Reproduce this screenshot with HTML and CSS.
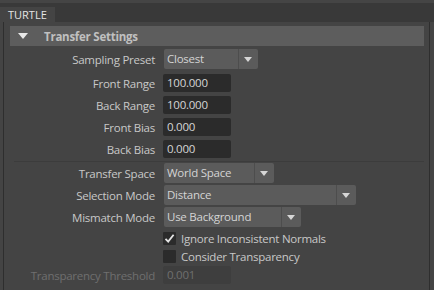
FILE: index.html
```html
<!DOCTYPE html>
<html lang="en">
<head>
    <meta charset="utf-8">
    <title>TURTLE</title>
    <link rel="stylesheet" href="styles.css">
</head>
<body>
    <div class="tabbar">
        <div class="tab">TURTLE</div>
    </div>
    <div class="panel">
        <div class="frame-header">
            <span class="frame-arrow"></span>
            <span class="frame-title">Transfer Settings</span>
        </div>

        <div class="row row-drop r-first">
            <label class="lbl">Sampling Preset</label>
            <div class="combo w-sampling"><span class="combo-text">Closest</span><span class="combo-btn"></span></div>
        </div>
        <div class="row row-field r-f1">
            <label class="lbl">Front Range</label>
            <div class="field">100.000</div>
        </div>
        <div class="row row-field">
            <label class="lbl">Back Range</label>
            <div class="field">100.000</div>
        </div>
        <div class="row row-field">
            <label class="lbl">Front Bias</label>
            <div class="field">0.000</div>
        </div>
        <div class="row row-field">
            <label class="lbl">Back Bias</label>
            <div class="field">0.000</div>
        </div>

        <div class="separator"></div>

        <div class="row row-drop r-after-sep">
            <label class="lbl">Transfer Space</label>
            <div class="combo w-space"><span class="combo-text">World Space</span><span class="combo-btn"></span></div>
        </div>
        <div class="row row-drop">
            <label class="lbl">Selection Mode</label>
            <div class="combo w-select"><span class="combo-text">Distance</span><span class="combo-btn"></span></div>
        </div>
        <div class="row row-drop">
            <label class="lbl">Mismatch Mode</label>
            <div class="combo w-mismatch"><span class="combo-text">Use Background</span><span class="combo-btn"></span></div>
        </div>

        <div class="row row-check r-c1">
            <span class="lbl"></span>
            <div class="check-wrap">
                <span class="checkbox checked">
                    <svg width="13" height="13" viewBox="0 0 13 13"><path d="M2.5 6.8 L5.2 9.6 L10.6 2.8" fill="none" stroke="#e6e6e6" stroke-width="1.8"/></svg>
                </span>
                <span class="check-text">Ignore Inconsistent Normals</span>
            </div>
        </div>
        <div class="row row-check r-c2">
            <span class="lbl"></span>
            <div class="check-wrap">
                <span class="checkbox"></span>
                <span class="check-text">Consider Transparency</span>
            </div>
        </div>
        <div class="row row-field r-last">
            <label class="lbl disabled">Transparency Threshold</label>
            <div class="field disabled">0.001</div>
        </div>
    </div>
</body>
</html>
```

FILE: styles.css
```css
html, body {
    margin: 0;
    padding: 0;
    background-color: #444444;
    font-family: "Open Sans", "Noto Sans", sans-serif;
    font-size: 11.5px;
    letter-spacing: -0.25px;
    color: #c8c8c8;
    overflow: hidden;
}
.tabbar {
    height: 19px;
    border-top: 3px solid #454545;
    background-color: #393939;
    display: flex;
    align-items: flex-end;
}
.tab {
    width: 55px;
    height: 15px;
    background-color: #444444;
    color: #e4e4e4;
    font-size: 11px;
    letter-spacing: 0;
    line-height: 15px;
    padding-left: 8px;
    box-sizing: border-box;
}
.panel {
    position: relative;
    height: 268px;
    margin-left: 3px;
    width: 427px;
    border-left: 1px solid #2e2e2e;
    border-right: 1px solid #2e2e2e;
    box-sizing: border-box;
    padding-top: 4px;
}
.frame-header {
    margin-left: 6px;
    width: 414px;
    height: 20px;
    background-color: #5d5d5d;
    display: flex;
    align-items: center;
}
.frame-arrow {
    width: 0;
    height: 0;
    margin-left: 8px;
    border-left: 5px solid transparent;
    border-right: 5px solid transparent;
    border-top: 6px solid #e8e8e8;
}
.frame-title {
    margin-left: 16px;
    font-weight: bold;
    font-size: 11.5px;
    color: #c0c0c0;
}
.row {
    display: grid;
    grid-template-columns: 151px 1fr;
    column-gap: 8px;
    align-items: center;
    margin-top: 4px;
}
.row-drop { height: 20px; margin-top: 2px; }
.row-field { height: 18px; }
.row-check { height: 13px; margin-top: 5px; }
.r-first { margin-top: 3px; }
.r-f1 { margin-top: 5px; }
.r-after-sep { margin-top: 1px; }
.r-c1 { margin-top: 4px; }
.r-c2 { margin-top: 5px; }
.r-last { margin-top: 4px; }
.lbl {
    text-align: right;
    white-space: nowrap;
    color: #c8c8c8;
}
.lbl.disabled { color: #6f6f6f; }
.combo {
    height: 20px;
    background-color: #5b5b5b;
    border-radius: 2px;
    display: flex;
    margin-left: 1px;
}
.combo-text {
    flex: 1;
    padding-left: 3px;
    line-height: 20px;
    color: #d4d4d4;
    border-right: 1px solid #4d4d4d;
}
.combo-btn {
    width: 19px;
    position: relative;
}
.combo-btn::after {
    content: "";
    position: absolute;
    left: 5px;
    top: 8px;
    border-left: 4px solid transparent;
    border-right: 4px solid transparent;
    border-top: 5px solid #d6d6d6;
}
.w-sampling { width: 94px; }
.w-space { width: 110px; }
.w-select { width: 192px; }
.w-mismatch { width: 137px; }
.field {
    width: 68px;
    height: 18px;
    background-color: #2b2b2b;
    border-radius: 2px;
    line-height: 18px;
    padding-left: 4px;
    box-sizing: border-box;
    color: #d6d6d6;
}
.field.disabled {
    background-color: #3e3e3e;
    color: #6f6f6f;
}
.separator {
    margin-top: 3px;
    margin-left: 10px;
    width: 410px;
    height: 1px;
    background-color: #3c3c3c;
}
.check-wrap {
    display: flex;
    align-items: center;
}
.checkbox {
    width: 13px;
    height: 13px;
    background-color: #2b2b2b;
    border-radius: 1px;
    display: inline-block;
}
.checkbox svg { display: block; }
.check-text {
    margin-left: 5px;
    color: #c8c8c8;
}
```
